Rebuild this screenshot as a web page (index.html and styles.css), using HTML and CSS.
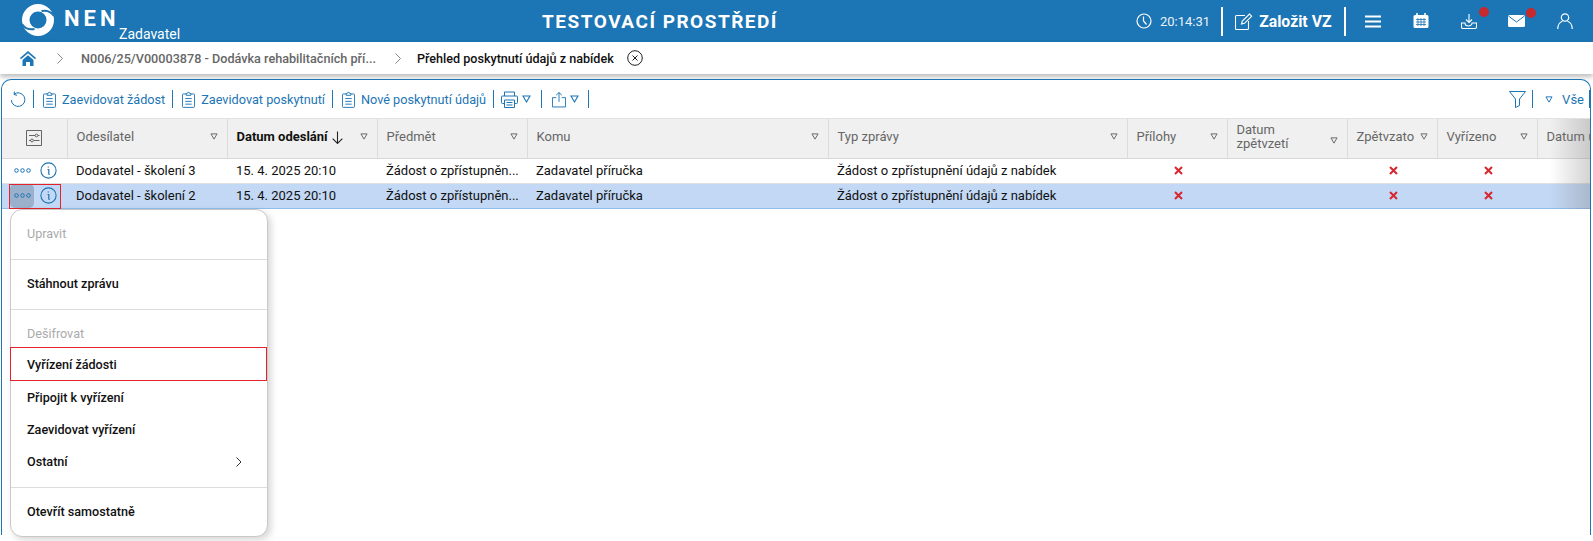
FILE: index.html
```html
<!DOCTYPE html>
<html lang="cs">
<head>
    <meta charset="UTF-8">
    <title>Přehled poskytnutí údajů z nabídek</title>
    <link rel="stylesheet" href="styles.css">
</head>
<body>

    <svg class="defs" width="0" height="0">
        <symbol id="clip" viewBox="0 0 14 18">
            <path d="M4.5 3H1.5a1 1 0 0 0-1 1v12.5a1 1 0 0 0 1 1h11a1 1 0 0 0 1-1V4a1 1 0 0 0-1-1H9.5M4.5 4.5V2.5h1.2a1.3 1.3 0 0 1 2.6 0h1.2v2zM3.5 8h7M3.5 11h7M3.5 14h7" fill="none" stroke="currentColor"/>
        </symbol>
        <symbol id="tri" viewBox="0 0 9 8">
            <path d="M1 1h7L4.5 7z" fill="none" stroke="currentColor" stroke-width="1.1"/>
        </symbol>
        <symbol id="info" viewBox="0 0 17 17">
            <circle cx="8.5" cy="8.5" r="7.6" fill="none" stroke="currentColor" stroke-width="1.1"/>
            <path d="M7.5 7.5h1.3v4.2c0 .6.3.8.9.6M8.3 4.6v1" fill="none" stroke="currentColor" stroke-width="1.2"/>
        </symbol>
        <symbol id="dots" viewBox="0 0 17 5">
            <circle cx="2.5" cy="2.5" r="1.8" fill="none" stroke="currentColor"/>
            <circle cx="8.5" cy="2.5" r="1.8" fill="none" stroke="currentColor"/>
            <circle cx="14.5" cy="2.5" r="1.8" fill="none" stroke="currentColor"/>
        </symbol>
        <symbol id="cross" viewBox="0 0 9 9">
            <path d="M1 1l7 7M8 1L1 8" fill="none" stroke="currentColor" stroke-width="2"/>
        </symbol>
    </svg>

    <header class="topbar">
        <div class="brand">
            <svg class="brand-logo" viewBox="0 0 32 32" width="32" height="32">
                <circle cx="16" cy="16" r="12.250" fill="none" stroke="#fff" stroke-width="7.500"/>
                <path d="M32 12C29 7.500 24.500 6 19.500 7" fill="none" stroke="#1c75b4" stroke-width="2"/>
                <path d="M0 20C3 24.500 7.500 26 12.500 25" fill="none" stroke="#1c75b4" stroke-width="2"/>
            </svg>
            <span class="brand-name">NEN</span>
            <span class="brand-role">Zadavatel</span>
        </div>
        <div class="env-title">TESTOVACÍ PROSTŘEDÍ</div>
        <div class="topbar-right">
            <svg class="clock" viewBox="0 0 16 16" width="16" height="16">
                <circle cx="8" cy="8" r="7" fill="none" stroke="#fff" stroke-width="1.2"/>
                <path d="M7.500 3.500V8l3 3.500" fill="none" stroke="#fff" stroke-width="1.2"/>
            </svg>
            <span class="time">20:14:31</span>
            <i class="top-sep"></i>
            <svg class="pencil" viewBox="0 0 18 17" width="18" height="17">
                <path d="M10 2.500H1.500a1 1 0 0 0-1 1v12a1 1 0 0 0 1 1h11a1 1 0 0 0 1-1V8M6.500 11l.8-3L14.500 1l2.200 2.200L9.500 10.300z" fill="none" stroke="#fff" stroke-width="1.100"/>
            </svg>
            <span class="create">Založit VZ</span>
            <i class="top-sep"></i>
            <svg class="burger" viewBox="0 0 16 13" width="16" height="13">
                <path d="M0 1.500h16M0 6.500h16M0 11.500h16" stroke="#fff" stroke-width="1.800"/>
            </svg>
            <svg class="calendar" viewBox="0 0 16 16" width="16" height="16">
                <path d="M2 2h12a1.500 1.500 0 0 1 1.500 1.500v10a1.500 1.500 0 0 1-1.500 1.500H2a1.500 1.500 0 0 1-1.500-1.500v-10A1.500 1.500 0 0 1 2 2z" fill="#fff"/>
                <path d="M4 0v3M12 0v3" stroke="#fff" stroke-width="1.600"/>
                <path d="M3 6.500h10M3 9h10M3 11.500h10M5 5v8M8 5v8M11 5v8" stroke="#1c75b4" stroke-width=".8"/>
            </svg>
            <span class="badged download">
                <svg viewBox="0 0 16 15" width="16" height="15">
                    <path d="M8 0v8M5 5.500L8 8.500l3-3M.5 9v4a1.500 1.500 0 0 0 1.500 1.500h12a1.500 1.500 0 0 0 1.500-1.500V9h-4.500a3.500 3 0 0 1-7 0z" fill="none" stroke="#fff" stroke-width="1.100"/>
                </svg>
                <b class="dot"></b>
            </span>
            <span class="badged mail">
                <svg viewBox="0 0 17 12" width="17" height="12">
                    <rect width="17" height="12" rx="1.500" fill="#fff"/>
                    <path d="M.5 1l8 6 8-6" fill="none" stroke="#1c75b4" stroke-width="1"/>
                </svg>
                <b class="dot"></b>
            </span>
            <svg class="user" viewBox="0 0 16 16" width="16" height="16">
                <circle cx="8" cy="4.500" r="3.700" fill="none" stroke="#fff" stroke-width="1.200"/>
                <path d="M.7 16c0-4 2.500-7 4.800-7.800M15.300 16c0-4-2.500-7-4.800-7.800" fill="none" stroke="#fff" stroke-width="1.200"/>
            </svg>
        </div>
    </header>

    <nav class="crumbs">
        <svg class="home" viewBox="0 0 16 15" width="16" height="15">
            <path d="M8 0L0 7l1 1.200L8 2.300l7 5.900L16 7z" fill="#1c75b4"/>
            <path d="M2.500 9L8 4.300 13.500 9v6H10v-4H6v4H2.500z" fill="#1c75b4"/>
        </svg>
        <svg class="crumb-arrow first" viewBox="0 0 6 11" width="6" height="11"><path d="M.5.500l5 5-5 5" fill="none" stroke="#888"/></svg>
        <span class="crumb-link">N006/25/V00003878 - Dodávka rehabilitačních pří...</span>
        <svg class="crumb-arrow" viewBox="0 0 6 11" width="6" height="11"><path d="M.5.500l5 5-5 5" fill="none" stroke="#888"/></svg>
        <span class="crumb-current">Přehled poskytnutí údajů z nabídek</span>
        <svg class="crumb-close" viewBox="0 0 16 16" width="16" height="16">
            <circle cx="8" cy="8" r="7.300" fill="none" stroke="#222"/>
            <path d="M5.500 5.500l5 5M10.500 5.500l-5 5" stroke="#222"/>
        </svg>
    </nav>

    <main class="card">
        <div class="toolbar">
            <svg class="tb-refresh" viewBox="0 0 16 16" width="16" height="16">
                <path d="M4 3.200A6.800 6.800 0 1 1 1.300 9M4.500 .5L4 3.500l3 .8" fill="none" stroke="currentColor" stroke-width="1"/>
            </svg>
            <i class="tb-sep"></i>
            <button class="tb-btn"><svg width="13" height="17"><use href="#clip"/></svg>Zaevidovat žádost</button>
            <i class="tb-sep"></i>
            <button class="tb-btn"><svg width="13" height="17"><use href="#clip"/></svg>Zaevidovat poskytnutí</button>
            <i class="tb-sep"></i>
            <button class="tb-btn"><svg width="13" height="17"><use href="#clip"/></svg>Nové poskytnutí údajů</button>
            <i class="tb-sep"></i>
            <svg class="tb-print" viewBox="0 0 17 17" width="17" height="17">
                <path d="M3.500 5V1h10v4M3.500 12.500H1.500a1 1 0 0 1-1-1V6a1 1 0 0 1 1-1h14a1 1 0 0 1 1 1v5.500a1 1 0 0 1-1 1h-2M3.500 9h10v7.500h-10zM5.500 11.500h6M5.500 14h6" fill="none" stroke="currentColor"/>
            </svg>
            <svg class="tb-tri" width="9" height="8"><use href="#tri"/></svg>
            <i class="tb-sep print-sep"></i>
            <svg class="tb-share" viewBox="0 0 15 17" width="14" height="17">
                <path d="M4.500 6.500H.5V16.500h14V6.500h-4M7.500 11V1M4.500 3.800L7.500 1l3 2.800" fill="none" stroke="currentColor"/>
            </svg>
            <svg class="tb-tri" width="9" height="8"><use href="#tri"/></svg>
            <i class="tb-sep share-sep"></i>
            <svg class="tb-filter" viewBox="0 0 17 17" width="17" height="17">
                <path d="M.5 .5h16L10.500 8v6.500l-4 2V8z" fill="none" stroke="currentColor"/>
            </svg>
            <i class="tb-sep filter-sep"></i>
            <svg class="tb-tri all-tri" width="8" height="7"><use href="#tri"/></svg>
            <span class="tb-all">Vše</span>
            <i class="tb-sep end-sep"></i>
        </div>

        <div class="grid-wrap">
            <table class="grid">
                <colgroup>
                    <col class="c-act"><col class="c-from"><col class="c-date"><col class="c-subj"><col class="c-to"><col class="c-type"><col class="c-att"><col class="c-wd"><col class="c-ret"><col class="c-done"><col class="c-last">
                </colgroup>
                <thead>
                    <tr>
                        <th class="settings">
                            <svg viewBox="0 0 16 16" width="16" height="16">
                                <path d="M.5 .5h15v15H.5zM3 5.500h6M12 5.500h1.500M3 10.500h1.500M8 10.500h5.500" fill="none" stroke="#555" stroke-width=".9"/>
                                <circle cx="10.500" cy="5.500" r="1.400" fill="none" stroke="#555" stroke-width=".9"/>
                                <circle cx="6" cy="10.500" r="1.400" fill="none" stroke="#555" stroke-width=".9"/>
                            </svg>
                        </th>
                        <th><div class="th-in">Odesílatel<svg class="th-tri" width="8" height="7"><use href="#tri"/></svg></div></th>
                        <th><div class="th-in sorted">Datum odeslání
                            <svg class="sort" viewBox="0 0 12 12" width="13" height="13"><path d="M6 .5v11M1.500 7L6 11.500 10.500 7" fill="none" stroke="#222"/></svg>
                            <svg class="th-tri" width="8" height="7"><use href="#tri"/></svg></div></th>
                        <th><div class="th-in">Předmět<svg class="th-tri" width="8" height="7"><use href="#tri"/></svg></div></th>
                        <th><div class="th-in">Komu<svg class="th-tri" width="8" height="7"><use href="#tri"/></svg></div></th>
                        <th><div class="th-in">Typ zprávy<svg class="th-tri" width="8" height="7"><use href="#tri"/></svg></div></th>
                        <th><div class="th-in">Přílohy<svg class="th-tri" width="8" height="7"><use href="#tri"/></svg></div></th>
                        <th><div class="th-in two-line"><span>Datum<br>zpětvzetí</span><svg class="th-tri" width="8" height="7"><use href="#tri"/></svg></div></th>
                        <th><div class="th-in">Zpětvzato<svg class="th-tri" width="8" height="7"><use href="#tri"/></svg></div></th>
                        <th><div class="th-in">Vyřízeno<svg class="th-tri" width="8" height="7"><use href="#tri"/></svg></div></th>
                        <th class="last-col"><div class="th-in">Datum u</div></th>
                    </tr>
                </thead>
                <tbody>
                    <tr>
                        <td class="actions"><span class="more"><svg width="17" height="5"><use href="#dots"/></svg></span><svg class="info" width="17" height="17"><use href="#info"/></svg></td>
                        <td>Dodavatel - školení 3</td>
                        <td>15. 4. 2025 20:10</td>
                        <td>Žádost o zpřístupněn...</td>
                        <td>Zadavatel příručka</td>
                        <td>Žádost o zpřístupnění údajů z nabídek</td>
                        <td class="mark"><svg width="9" height="9"><use href="#cross"/></svg></td>
                        <td></td>
                        <td class="mark"><svg width="9" height="9"><use href="#cross"/></svg></td>
                        <td class="mark"><svg width="9" height="9"><use href="#cross"/></svg></td>
                        <td></td>
                    </tr>
                    <tr class="selected">
                        <td class="actions"><span class="more open"><svg width="17" height="5"><use href="#dots"/></svg></span><svg class="info" width="17" height="17"><use href="#info"/></svg></td>
                        <td>Dodavatel - školení 2</td>
                        <td>15. 4. 2025 20:10</td>
                        <td>Žádost o zpřístupněn...</td>
                        <td>Zadavatel příručka</td>
                        <td>Žádost o zpřístupnění údajů z nabídek</td>
                        <td class="mark"><svg width="9" height="9"><use href="#cross"/></svg></td>
                        <td></td>
                        <td class="mark"><svg width="9" height="9"><use href="#cross"/></svg></td>
                        <td class="mark"><svg width="9" height="9"><use href="#cross"/></svg></td>
                        <td></td>
                    </tr>
                </tbody>
            </table>
            <div class="edge-fade"></div>
        </div>

        <div class="callout"></div>

        <ul class="menu">
            <li class="disabled">Upravit</li>
            <li class="divider"></li>
            <li>Stáhnout zprávu</li>
            <li class="divider"></li>
            <li class="disabled">Dešifrovat</li>
            <li class="marked">Vyřízení žádosti</li>
            <li>Připojit k vyřízení</li>
            <li>Zaevidovat vyřízení</li>
            <li class="has-sub">Ostatní<svg viewBox="0 0 6 10" width="6" height="10"><path d="M.5 .5L5 5 .5 9.500" fill="none" stroke="#333"/></svg></li>
            <li class="divider"></li>
            <li>Otevřít samostatně</li>
        </ul>
    </main>

</body>
</html>
```

FILE: styles.css
```css
* {
    box-sizing: border-box;
}

html, body {
    margin: 0;
    height: 100%;
    overflow: hidden;
}

body {
    font-family: Roboto, "Liberation Sans", sans-serif;
    font-size: 13px;
    color: #111;
    background: #fff;
}

.defs {
    position: absolute;
}

/* horni lista */
.topbar {
    height: 42px;
    background-color: #1c75b4;
    color: #fff;
    display: flex;
    align-items: center;
}

.brand {
    width: 187px;
    height: 42px;
    padding: 4px 0 0 22px;
    display: flex;
    flex: none;
}

.brand-logo {
    flex: none;
}

.brand-name {
    flex: none;
    width: 55px;
    font-weight: 700;
    font-size: 22px;
    letter-spacing: 4px;
    margin: 3px 0 0 10px;
    line-height: 24px;
}

.brand-role {
    font-size: 14px;
    line-height: 16px;
    margin-top: 22px;
}

.env-title {
    flex: none;
    width: 946px;
    text-align: center;
    font-weight: 700;
    font-size: 19px;
    letter-spacing: 1.5px;
}

.topbar-right {
    flex: 1;
    display: flex;
    align-items: center;
    height: 42px;
}

.clock {
    margin-left: 3px;
}

.time {
    margin-left: 8px;
    font-size: 13px;
    color: #eaf2f8;
}

.top-sep {
    width: 2px;
    height: 29px;
    background: #fff;
}

.time + .top-sep {
    margin-left: 11px;
}

.pencil {
    margin-left: 12px;
}

.create {
    margin: 0 12px 0 6px;
    font-weight: 700;
    font-size: 15.8px;
}

.burger {
    margin-left: 19px;
}

.calendar {
    margin-left: 32px;
}

.badged {
    position: relative;
    display: flex;
}

.download {
    margin-left: 32px;
}

.mail {
    margin-left: 31px;
}

.dot {
    position: absolute;
    top: -7px;
    right: -12px;
    width: 10px;
    height: 10px;
    border-radius: 50%;
    background: #c62a2f;
}

.mail .dot {
    right: -11px;
}

.user {
    margin-left: 32px;
}

/* drobecky */
.crumbs {
    height: 32px;
    display: flex;
    align-items: center;
    padding-left: 20px;
    background: #fff;
    box-shadow: 0 3px 5px rgba(0, 0, 0, .26);
}

.crumb-arrow {
    margin-left: 19px;
    flex: none;
}

.crumb-arrow.first {
    margin-left: 21px;
}

.crumb-link {
    margin-left: 18px;
    font-weight: 500;
    font-size: 12.65px;
    color: #666;
}

.crumb-current {
    margin-left: 16px;
    font-weight: 500;
    font-size: 12.6px;
    color: #111;
}

.crumb-close {
    margin-left: 13px;
}

/* karta s tabulkou */
.card {
    position: relative;
    margin: 5px 2px 0 1px;
    height: 456px;
    border: 1px solid #1c75b4;
    border-bottom: none;
    border-radius: 10px 10px 0 0;
    background: #fff;
}

.toolbar {
    height: 39px;
    display: flex;
    align-items: center;
    padding-left: 8px;
    color: #1c75b4;
    border-bottom: 1px solid #e2e2e2;
}

.tb-sep {
    width: 1px;
    height: 18px;
    background: #1c75b4;
    margin: 0 9px 0 7px;
    flex: none;
}

.tb-btn {
    border: none;
    background: none;
    padding: 0;
    color: #1c75b4;
    font: 12.7px Roboto, sans-serif;
    display: flex;
    align-items: center;
    gap: 6px;
}

.tb-print {
    margin-left: -2px;
}

.tb-tri {
    margin-left: 4px;
}

.print-sep {
    margin-left: 10px;
    margin-right: 10px;
}

.share-sep {
    margin-left: 9px;
}

.tb-filter {
    margin-left: auto;
}

.filter-sep {
    margin-left: 6px;
    margin-right: 12px;
}

.all-tri {
    margin-left: 0;
}

.tb-all {
    margin: 0 5px 0 9px;
}

.end-sep {
    margin: 0;
}

.grid-wrap {
    position: relative;
    overflow: hidden;
}

.grid {
    width: 1595px;
    table-layout: fixed;
    border-collapse: collapse;
}

.c-act { width: 65px; }
.c-from { width: 160px; }
.c-date { width: 150px; }
.c-subj { width: 150px; }
.c-to { width: 301px; }
.c-type { width: 299px; }
.c-att { width: 100px; }
.c-wd { width: 120px; }
.c-ret { width: 90px; }
.c-done { width: 100px; }
.c-last { width: 60px; }

.grid th {
    height: 39px;
    padding: 0;
    background: #f0f0f0;
    border-right: 1px solid #dcdcdc;
    border-bottom: 1px solid #d8d8d8;
    font-weight: 400;
    text-align: left;
    color: #666;
}

.grid th.last-col {
    border-right: none;
}

.settings {
    text-align: center !important;
}

.settings svg {
    display: block;
    margin: 0 auto;
}

.th-in {
    display: flex;
    align-items: center;
    padding: 0 9px 2px 9px;
    line-height: 14px;
    white-space: nowrap;
}

.th-tri {
    margin-left: auto;
    color: #666;
    flex: none;
    position: relative;
    top: -1px;
}

.two-line .th-tri {
    top: 3px;
}

.sorted {
    font-weight: 700;
    color: #111;
}

.sort {
    margin-left: 3px;
}

.grid td {
    height: 25px;
    padding: 0 9px;
    white-space: nowrap;
    overflow: hidden;
    border-bottom: 1px solid #e0e0e0;
    color: #111;
}

.selected td {
    background: #c2d8f4;
    border-bottom-color: #90bdeb;
}

.grid td.actions {
    padding: 0 0 0 8px;
    color: #1c75b4;
}

.actions > svg, .more {
    vertical-align: middle;
}

.more {
    display: inline-flex;
    align-items: center;
    justify-content: center;
    width: 24px;
    height: 24px;
    border-radius: 5px;
    margin-right: 6px;
}

.more.open {
    background: #9bb0cb;
}

.callout {
    position: absolute;
    left: 7px;
    top: 104px;
    width: 52px;
    height: 25px;
    border: 1px solid #e3222c;
    z-index: 4;
}

.grid td.mark {
    text-align: center;
    padding: 0;
    color: #d9262e;
}

.mark svg {
    position: relative;
    left: 1px;
}

.edge-fade {
    position: absolute;
    top: 0;
    right: 0;
    bottom: 0;
    width: 40px;
    background: linear-gradient(to right, rgba(120, 120, 120, 0), rgba(120, 120, 120, .32));
    pointer-events: none;
}

/* kontextove menu */
.menu {
    position: absolute;
    left: 8px;
    top: 129px;
    width: 258px;
    height: 328px;
    margin: 0;
    padding: 7px 0 0;
    list-style: none;
    background: #fff;
    border: 1px solid #c8c8c8;
    border-radius: 12px;
    box-shadow: 3px 3px 7px rgba(0, 0, 0, .16);
    font-weight: 500;
    font-size: 12.6px;
    z-index: 5;
}

.menu li {
    height: 32px;
    line-height: 32px;
    padding: 1px 0 0 16px;
}

.menu .disabled {
    color: #aaa;
    font-weight: 400;
}

.menu .divider {
    height: 1px;
    margin: 10px 0 7px;
    padding: 0;
    background: #dcdcdc;
}

.menu .marked {
    border: 1px solid #e3222c;
    height: 34px;
    margin: -2px 0 0 -1px;
    padding: 1px 0 0 16px;
}

.menu .has-sub {
    display: flex;
    align-items: center;
    justify-content: space-between;
    padding-right: 25px;
}
```
